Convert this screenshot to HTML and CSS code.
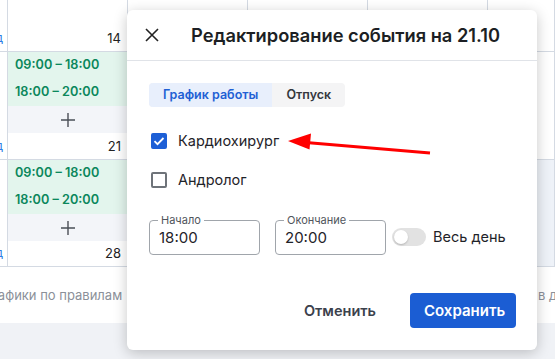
FILE: index.html
```html
<!DOCTYPE html>
<html lang="ru">
  <head>
    <meta charset="utf-8" />
    <meta name="viewport" content="width=device-width, initial-scale=1.0" />
    <title>Редактирование события</title>
    <link rel="stylesheet" href="styles.css">
  </head>

  <body>
    <div class="page">
      <!-- calendar behind the dialog -->
      <div class="calendar">
        <div class="row row-date row-date--first">
          <div class="cell stub"><span class="week">нед</span></div>
          <div class="cell"><span class="day-num">14</span></div>
          <div class="cell"></div>
          <div class="cell"></div>
          <div class="cell"></div>
          <div class="cell"></div>
        </div>
        <div class="row row-events">
          <div class="cell stub"></div>
          <div class="cell shifts">
            <span class="shift">09:00 – 18:00</span>
            <span class="shift">18:00 – 20:00</span>
          </div>
          <div class="cell"></div>
          <div class="cell"></div>
          <div class="cell"></div>
          <div class="cell"></div>
        </div>
        <div class="row row-add">
          <div class="cell stub"></div>
          <div class="cell add">
            <svg width="14" height="14" viewBox="0 0 14 14"><path d="M7 0v14M0 7h14" stroke="#4a4f57" stroke-width="1.4" fill="none"/></svg>
          </div>
          <div class="cell"></div>
          <div class="cell"></div>
          <div class="cell"></div>
          <div class="cell"></div>
        </div>

        <div class="row row-date">
          <div class="cell stub"><span class="week">нед</span></div>
          <div class="cell"><span class="day-num">21</span></div>
          <div class="cell"></div>
          <div class="cell"></div>
          <div class="cell"></div>
          <div class="cell"></div>
        </div>
        <div class="row row-events">
          <div class="cell stub"></div>
          <div class="cell shifts">
            <span class="shift">09:00 – 18:00</span>
            <span class="shift">18:00 – 20:00</span>
          </div>
          <div class="cell"></div>
          <div class="cell"></div>
          <div class="cell"></div>
          <div class="cell muted"></div>
        </div>
        <div class="row row-add">
          <div class="cell stub"></div>
          <div class="cell add">
            <svg width="14" height="14" viewBox="0 0 14 14"><path d="M7 0v14M0 7h14" stroke="#4a4f57" stroke-width="1.4" fill="none"/></svg>
          </div>
          <div class="cell"></div>
          <div class="cell"></div>
          <div class="cell"></div>
          <div class="cell muted"></div>
        </div>

        <div class="row row-date row-date--last">
          <div class="cell stub"><span class="week">нед</span></div>
          <div class="cell"><span class="day-num">28</span></div>
          <div class="cell"></div>
          <div class="cell"></div>
          <div class="cell"></div>
          <div class="cell muted"></div>
        </div>

        <div class="legend">
          <span class="legend-left">Графики по правилам</span>
          <span class="legend-right">в днях</span>
        </div>
        <div class="band"></div>
      </div>

      <!-- dialog -->
      <div class="modal" role="dialog">
        <div class="modal-head">
          <button class="close" type="button" aria-label="Закрыть">
            <svg width="14" height="14" viewBox="0 0 14 14"><path d="M1 1l12 12M13 1L1 13" stroke="#222" stroke-width="1.6" fill="none"/></svg>
          </button>
          <h1 class="modal-title">Редактирование события на 21.10</h1>
        </div>

        <div class="modal-body">
          <div class="tabs">
            <span class="tab tab--active">График работы</span>
            <span class="tab">Отпуск</span>
          </div>

          <label class="check-row">
            <span class="check check--on">
              <svg width="12" height="10" viewBox="0 0 12 10"><path d="M1.5 5.2l3 3L10.5 2" stroke="#fff" stroke-width="1.8" fill="none"/></svg>
            </span>
            <span class="check-label">Кардиохирург</span>
          </label>
          <label class="check-row">
            <span class="check"></span>
            <span class="check-label">Андролог</span>
          </label>

          <div class="time-row">
            <fieldset class="field">
              <legend>Начало</legend>
              <div class="field-value">18:00</div>
            </fieldset>
            <fieldset class="field">
              <legend>Окончание</legend>
              <div class="field-value">20:00</div>
            </fieldset>
            <span class="toggle"><span class="knob"></span></span>
            <span class="toggle-label">Весь день</span>
          </div>
        </div>

        <div class="modal-foot">
          <button class="btn btn--text" type="button">Отменить</button>
          <button class="btn btn--primary" type="button">Сохранить</button>
        </div>
      </div>

      <!-- red annotation arrow -->
      <svg class="arrow" width="555" height="359" viewBox="0 0 555 359">
        <path d="M430 153L306 142.4" stroke="#f00" stroke-width="3" fill="none"/>
        <polygon points="288,141 311,133.5 309.5,149.5" fill="#f00"/>
      </svg>
    </div>
  </body>
</html>
```

FILE: styles.css
```css
* {
  margin: 0;
  padding: 0;
  box-sizing: border-box;
}

body {
  font-family: Inter, 'Noto Sans', sans-serif;
  color: #1f2329;
  background: #fff;
  overflow: hidden;
}

.page {
  position: relative;
  width: 555px;
  height: 359px;
  overflow: hidden;
}

/* calendar */
.calendar {
  display: flex;
  flex-direction: column;
  height: 100%;
}

.row {
  display: grid;
  grid-template-columns: 8px repeat(4, 120px) 1fr;
}

.cell {
  border-right: 1px solid #d4dae3;
}

.row-date .cell {
  border-bottom: 1px solid #d4dae3;
  display: flex;
  align-items: flex-end;
  justify-content: flex-end;
  padding: 0 6px 6px 0;
}

.row-date {
  height: 27px;
}

.row-date--first {
  height: 52px;
}

.row-date--last {
  height: 26px;
}

.row-date .stub {
  padding: 0 4px 6px 0;
  overflow: hidden;
}

.week {
  font-size: 12px;
  line-height: 14px;
  color: #2d7be6;
  white-space: nowrap;
  flex-shrink: 0;
}

.day-num {
  font-size: 13px;
  line-height: 14px;
  color: #222;
}

.row-events {
  height: 54px;
}

.shifts {
  background: #e3f5ed;
  display: flex;
  flex-direction: column;
  padding: 3px 0 0 7px;
  gap: 7px;
}

.shift {
  font-size: 12.7px;
  line-height: 20px;
  font-weight: 600;
  color: #0b875c;
}

.row-add {
  height: 27px;
}

.add {
  background: #f3f5f9;
  display: flex;
  align-items: center;
  justify-content: center;
}

.muted {
  background: #eef2f8;
}

.legend {
  height: 56px;
  display: flex;
  align-items: center;
  font-size: 13px;
  color: #8b9099;
  white-space: nowrap;
  overflow: hidden;
}

.legend-left {
  width: 555px;
  margin-left: -17px;
  flex-shrink: 0;
}

.band {
  flex: 1;
  background: #f0f2f6;
}

/* dialog */
.modal {
  position: absolute;
  left: 127px;
  top: 10px;
  width: 410px;
  height: 340px;
  background: #fff;
  border-radius: 6px;
  box-shadow: 0 3px 14px rgba(0, 0, 0, 0.22);
  display: flex;
  flex-direction: column;
}

.modal-head {
  height: 51px;
  border-bottom: 1px solid #e0e3e8;
  display: flex;
  align-items: center;
  padding-left: 18px;
  gap: 32px;
}

.close {
  border: 0;
  background: none;
  width: 14px;
  height: 14px;
  display: flex;
}

.modal-title {
  font-size: 18.3px;
  line-height: 24px;
  font-weight: 600;
  color: #1c1f24;
}

.modal-body {
  padding: 22px 22px 0;
  display: flex;
  flex-direction: column;
  align-items: flex-start;
}

.tabs {
  display: inline-flex;
  height: 24px;
  border-radius: 4px;
  overflow: hidden;
  background: #f4f4f5;
}

.tab {
  font-size: 12.5px;
  line-height: 24px;
  font-weight: 600;
  color: #33373d;
  padding: 0 14px;
}

.tab--active {
  background: #e8effc;
  color: #2160d4;
  padding: 0 14px;
}

.check-row {
  display: flex;
  align-items: center;
  gap: 11px;
  height: 24px;
  padding-left: 2px;
  margin-top: 22px;
}

.check-row + .check-row {
  margin-top: 15px;
}

.check {
  width: 16px;
  height: 16px;
  border: 2px solid #6e7379;
  border-radius: 2px;
  display: flex;
  align-items: center;
  justify-content: center;
}

.check--on {
  background: #1d5fd6;
  border-color: #1d5fd6;
}

.check-label {
  font-size: 14.5px;
  line-height: 20px;
  color: #1f2329;
}

.time-row {
  display: flex;
  align-items: flex-end;
  margin-top: 22px;
}

.field {
  width: 111px;
  border: 1px solid #a0a5ab;
  border-radius: 4px;
  padding: 0 8px 6px;
  margin-right: 15px;
}

.field + .field {
  margin-right: 6px;
}

.field legend {
  font-size: 11px;
  line-height: 12px;
  color: #50555c;
  padding: 0 3px;
}

.field-value {
  font-size: 15px;
  line-height: 20px;
  margin-top: 2px;
  padding-left: 1px;
  color: #1f2329;
}

.toggle {
  width: 34px;
  height: 18px;
  border-radius: 9px;
  background: #e2e2e2;
  display: flex;
  align-items: center;
  padding-left: 2px;
  margin-bottom: 9px;
}

.knob {
  width: 14px;
  height: 14px;
  border-radius: 50%;
  background: #fff;
  box-shadow: 0 1px 2px rgba(0, 0, 0, 0.2);
}

.toggle-label {
  font-size: 14.5px;
  line-height: 20px;
  margin: 0 0 8px 7px;
  color: #1f2329;
}

.modal-foot {
  margin-top: auto;
  display: flex;
  justify-content: flex-end;
  align-items: center;
  gap: 18px;
  padding: 0 21px 22px;
}

.btn {
  font-family: inherit;
  font-size: 15px;
  font-weight: 600;
  border: 0;
  border-radius: 4px;
  height: 35px;
  cursor: pointer;
}

.btn--text {
  font-size: 14.5px;
  background: none;
  color: #3b414c;
  padding: 0 16px;
}

.btn--primary {
  background: #1b5dd3;
  color: #fff;
  padding: 0 14px;
  width: 106px;
}

.arrow {
  position: absolute;
  left: 0;
  top: 0;
  pointer-events: none;
}
```
